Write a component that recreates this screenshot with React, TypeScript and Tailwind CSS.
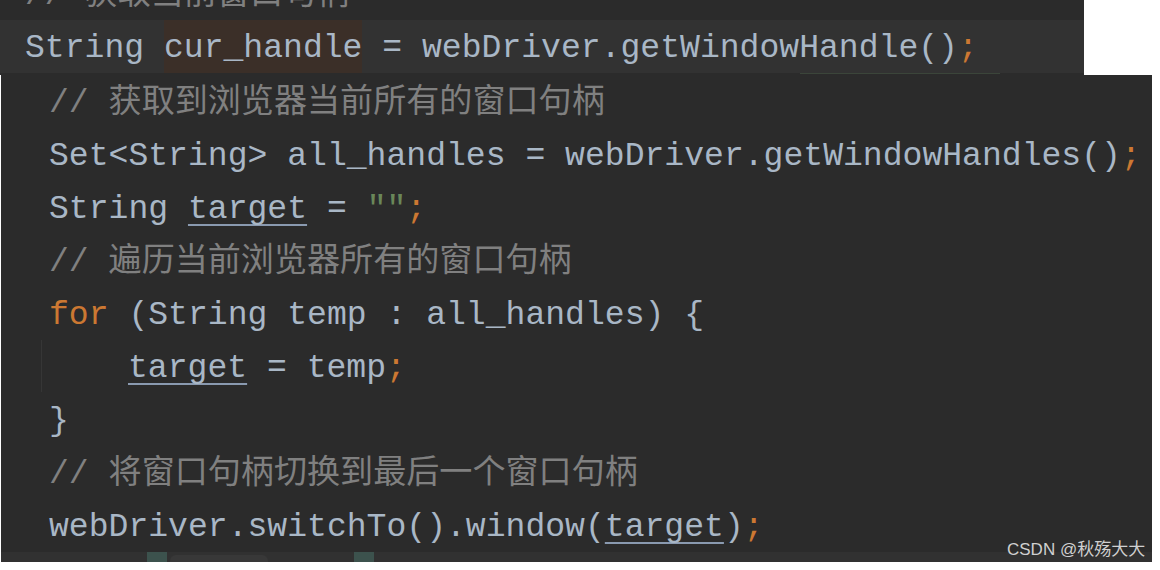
import React from "react";

type Tok = { t: string; c?: string };

const D = "text-[#a9b7c6]";
const K = "text-[#cc7832]";
const C = "text-[#808080]";
const S = "text-[#6a8759]";
const U =
  "text-[#a9b7c6] underline decoration-2 underline-offset-[6px] decoration-[#8a9ab0]";

function Line({ toks, className = "" }: { toks: Tok[]; className?: string }) {
  return (
    <div className={"h-[53px] pt-[5px] flex items-center whitespace-pre leading-none " + className}>
      {toks.map((k, i) => (
        <span key={i} className={k.c ?? D}>
          {k.t}
        </span>
      ))}
    </div>
  );
}

export default function App() {
  const font = {
    fontFamily: '"Liberation Mono", "Noto Sans CJK SC", monospace',
  };
  return (
    <div className="w-[1160px] h-[570px] bg-white relative overflow-hidden text-[33.1px]" style={font}>
      {/* top snippet */}
      <div className="w-[1084px] h-[75px] bg-[#2b2b2b] overflow-hidden relative">
        <div className="-mt-[33px] flex flex-col">
          <Line className="pl-[25px]" toks={[{ t: "// 获取当前窗口句柄", c: C }]} />
          <div className="h-[53px] pl-[25px] pt-[5px] bg-[#323232] flex items-center whitespace-pre leading-none">
            <span className={D}>String </span>
            <span className="text-[#a9b7c6] bg-[#3b2f28] h-[53px] -mt-[5px] pt-[5px] flex items-center">cur_handle</span>
            <span className={D}> = webDriver.getWindowHandle()</span>
            <span className={K}>;</span>
          </div>
        </div>
        <div className="absolute left-[800px] top-[73px] w-[200px] h-[1px] bg-[#3b453a]" />
      </div>

      {/* bottom snippet */}
      <div className="ml-[1px] w-[1151px] h-[487px] bg-[#2b2b2b] flex flex-col">
        <Line className="pl-[48px]" toks={[{ t: "// 获取到浏览器当前所有的窗口句柄", c: C }]} />
        <Line
          className="pl-[48px]"
          toks={[{ t: "Set<String> all_handles = webDriver.getWindowHandles()" }, { t: ";", c: K }]}
        />
        <Line
          className="pl-[48px]"
          toks={[
            { t: "String " },
            { t: "target", c: U },
            { t: " = " },
            { t: '""', c: S },
            { t: ";", c: K },
          ]}
        />
        <Line className="pl-[48px]" toks={[{ t: "// 遍历当前浏览器所有的窗口句柄", c: C }]} />
        <Line
          className="pl-[48px]"
          toks={[{ t: "for", c: K }, { t: " (String temp : all_handles) {" }]}
        />
        <div className="relative">
          <div className="absolute left-[40px] top-0 w-[1px] h-[52px] bg-[#363636]" />
          <Line
            className="pl-[127px]"
            toks={[{ t: "target", c: U }, { t: " = temp" }, { t: ";", c: K }]}
          />
        </div>
        <Line className="pl-[48px]" toks={[{ t: "}" }]} />
        <Line className="pl-[48px]" toks={[{ t: "// 将窗口句柄切换到最后一个窗口句柄", c: C }]} />
        <Line
          className="pl-[48px]"
          toks={[
            { t: "webDriver.switchTo().window(" },
            { t: "target", c: U },
            { t: ")" },
            { t: ";", c: K },
          ]}
        />
        <div className="h-[10px] bg-[#313131] flex items-end">
          <div className="ml-[146px] w-[20px] h-[10px] bg-[#3c524d]" />
          <div className="ml-[3px] w-[98px] h-[7px] rounded-t-[6px] bg-[#383838]" />
          <div className="ml-[86px] w-[20px] h-[10px] bg-[#3c524d]" />
        </div>
      </div>

      <div
        className="absolute left-[1007px] top-[538px] text-[17px] leading-[24px] text-[#d0d0d0]"
        style={{ fontFamily: '"Liberation Sans", "Noto Sans CJK SC", sans-serif' }}
      >
        CSDN @秋殇大大
      </div>
    </div>
  );
}
